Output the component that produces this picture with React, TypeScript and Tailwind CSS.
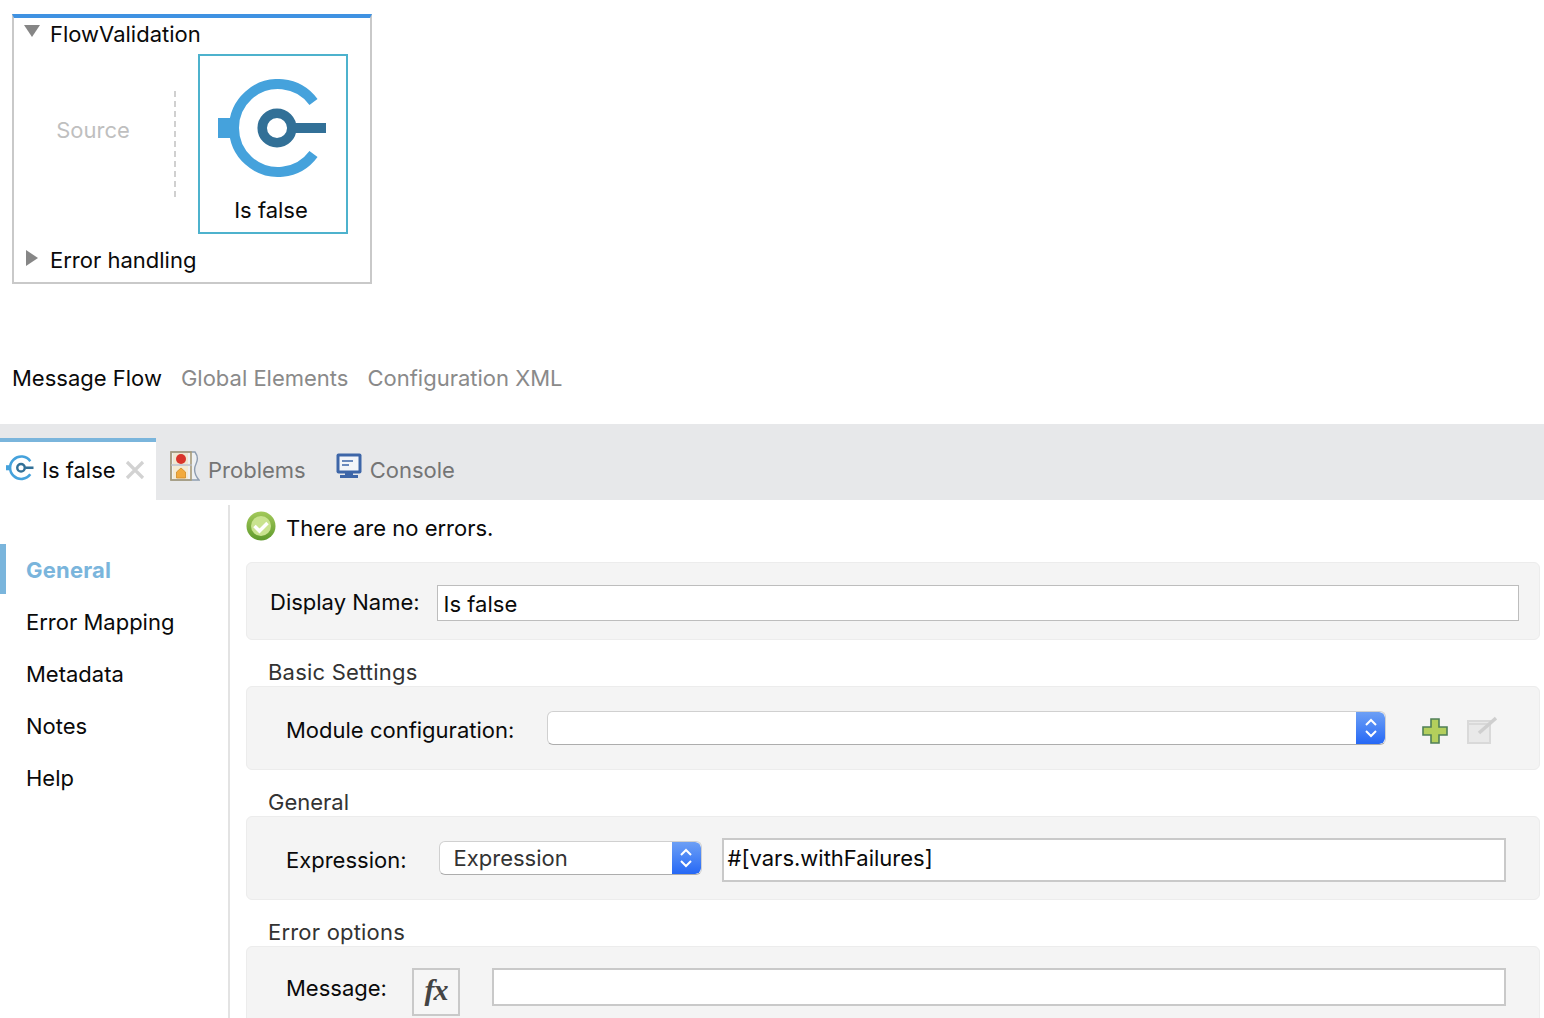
import React from "react";

const Logo = ({ className }: { className?: string }) => (
  <svg viewBox="0 0 110 100" className={className} fill="none">
    <path d="M95.5 23A44 44 0 1 0 95.5 75" stroke="#45a2dc" strokeWidth="10" />
    <rect x="0" y="39" width="12" height="20" fill="#45a2dc" />
    <circle cx="59" cy="49" r="14.8" stroke="#327097" strokeWidth="9.5" />
    <rect x="76" y="44" width="32" height="10" fill="#327097" />
  </svg>
);

const Chevrons = () => (
  <div className="flex h-full w-[29px] items-center justify-center rounded-r-[6px] bg-gradient-to-b from-[#6d9ff5] to-[#2567f5]">
    <svg viewBox="0 0 14 22" className="h-[22px] w-[14px]" fill="none" stroke="white" strokeWidth="2">
      <path d="M2 8l5-5 5 5M2 14l5 5 5-5" />
    </svg>
  </div>
);

const Panel = ({ className, children }: { className?: string; children: React.ReactNode }) => (
  <div className={`flex items-center rounded-[6px] border border-[#ececec] bg-[#f4f4f4] ${className ?? ""}`}>{children}</div>
);

export default function App() {
  return (
    <div className="flex h-[1018px] w-[1544px] flex-col overflow-hidden bg-white text-[22px] leading-[28px] text-[#0a0a0a] [font-family:Inter,sans-serif]">
      <div className="flex h-[424px] flex-col pl-3 pt-[14px]">
        <div className="flex h-[270px] w-[360px] flex-col border-2 border-t-4 border-[#c9c9c9] border-t-[#3f92e2]">
          <div className="flex h-[32px] items-center">
            <svg viewBox="0 0 16 12" className="ml-[10px] mb-[6px] h-3 w-4">
              <path d="M0 0h16L8 12z" fill="#868686" />
            </svg>
            <span className="ml-[10px]">FlowValidation</span>
          </div>
          <div className="flex h-[184px] items-start">
            <div className="mt-[41px] flex h-[106px] w-[162px] justify-center border-r-2 border-dashed border-[#d0d0d0] pr-[2px] pt-[25px] text-[#bfbfbf]">
              Source
            </div>
            <div className="ml-[22px] mt-[4px] flex h-[180px] w-[150px] flex-col items-center border-2 border-[#4db2cd]">
              <Logo className="mt-[23px] ml-[18px] h-[100px] w-[110px] self-start" />
              <span className="mr-[4px] mt-[17px]">Is false</span>
            </div>
          </div>
          <div className="mt-[4px] flex h-[44px] items-center">
            <svg viewBox="0 0 12 16" className="ml-[12px] mb-[4px] h-4 w-3">
              <path d="M0 0l12 8L0 16z" fill="#868686" />
            </svg>
            <span className="ml-[12px]">Error handling</span>
          </div>
        </div>
        <div className="mt-[80px] flex gap-[19px] text-[#8a8a8a]">
          <span className="text-[#0a0a0a]">Message Flow</span>
          <span>Global Elements</span>
          <span>Configuration XML</span>
        </div>
      </div>

      <div className="flex h-[76px] items-end bg-[#e7e8ea]">
        <div className="flex h-[62px] w-[156px] items-center border-t-4 border-[#7ab5dc] bg-white pb-[2px] pl-[6px]">
          <Logo className="mb-[4px] h-[26px] w-[28px]" />
          <span className="ml-[8px]">Is false</span>
          <svg viewBox="0 0 20 20" className="ml-[9px] h-5 w-5" stroke="#d2d2d2" strokeWidth="3.2">
            <path d="M2 2l16 16M18 2L2 18" />
          </svg>
        </div>
        <div className="flex h-[62px] items-center pl-[14px] pt-[2px] text-[#757575]">
          <svg viewBox="0 0 30 30" className="mb-[8px] h-[30px] w-[30px]">
            <path d="M1 1h24c3 4 3 8 1 12s-2 10 3 16H1z" fill="#eef0f2" stroke="#8f9db0" strokeWidth="1.4" />
            <path d="M1 1h20v28H1z" fill="none" stroke="#a89b78" strokeWidth="1.6" />
            <path d="M1 14h21" stroke="#b9bcc4" strokeWidth="1.4" />
            <path d="M3 2h15v11H3z" fill="#efe6d0" />
            <path d="M3 15h15v13H3z" fill="#f4ead3" />
            <circle cx="11" cy="8" r="5" fill="#d9342b" />
            <path d="M6.5 27v-6l4.5-4 4.5 4v6z" fill="#f2aa3c" stroke="#d08a25" strokeWidth="0.8" />
          </svg>
          <span className="ml-[8px]">Problems</span>
        </div>
        <div className="flex h-[62px] items-center pl-[30px] pt-[2px] text-[#757575]">
          <svg viewBox="0 0 26 26" className="mb-[8px] h-[26px] w-[26px]">
            <rect x="0.5" y="0.5" width="25" height="20" rx="2" fill="#3e66a8" />
            <rect x="3.5" y="3.5" width="19" height="14" fill="#f3f5f9" />
            <path d="M6 8h11M6 12h7" stroke="#3e66a8" strokeWidth="1.5" />
            <path d="M9 20h8v2h5v3H4v-3h5z" fill="#3e66a8" />
          </svg>
          <span className="ml-[8px]">Console</span>
        </div>
      </div>

      <div className="flex min-h-0 flex-1">
        <div className="mt-[5px] flex w-[230px] shrink-0 flex-col border-r-2 border-[#e3e3e3] pt-[39px]">
          <div className="flex h-[50px] items-center border-l-[6px] border-[#7ab5dc] pl-[20px] pt-[2px] font-bold tracking-[0.2px] text-[#7ab5dc]">General</div>
          <div className="mt-[2px] flex h-[52px] items-center pl-[26px]">Error Mapping</div>
          <div className="flex h-[52px] items-center pl-[26px]">Metadata</div>
          <div className="flex h-[52px] items-center pl-[26px]">Notes</div>
          <div className="flex h-[52px] items-center pl-[26px]">Help</div>
        </div>

        <div className="ml-4 flex w-[1294px] flex-col self-start">
          <div className="mt-[12px] flex h-[28px] items-center">
            <svg viewBox="0 0 30 30" className="h-[30px] w-[30px]">
              <defs>
                <linearGradient id="okRing" x1="0" y1="0" x2="0" y2="1">
                  <stop offset="0" stopColor="#a3c95a" />
                  <stop offset="1" stopColor="#5f9a2c" />
                </linearGradient>
              </defs>
              <circle cx="15" cy="15" r="14.5" fill="url(#okRing)" />
              <circle cx="15" cy="15" r="10" fill="#c9e38f" />
              <path d="M8.5 15l5 5 8-8" stroke="white" strokeWidth="3.5" fill="none" />
            </svg>
            <span className="ml-[10px] pt-[4px]">There are no errors.</span>
          </div>

          <Panel className="mt-[22px] h-[78px] pl-[23px]">
            <span className="pt-[2px]">Display Name:</span>
            <div className="ml-[17px] mt-[4px] flex h-[36px] w-[1082px] items-center border border-[#bdbdbd] bg-white pl-[6px] pt-[2px]">Is false</div>
          </Panel>

          <div className="ml-[22px] mt-[18px] h-[28px] tracking-[0.2px] text-[#333]">Basic Settings</div>
          <Panel className="h-[84px] pl-[39px]">
            <span className="pt-[4px]">Module configuration:</span>
            <div className="ml-[33px] flex h-[34px] w-[839px] justify-end overflow-hidden rounded-[6px] border border-[#d0d0d0] border-b-[#adadad] bg-white">
              <Chevrons />
            </div>
            <svg viewBox="0 0 26 26" className="ml-[36px] mt-[6px] h-[26px] w-[26px]">
              <path d="M9 1h8v8h8v8h-8v8H9v-8H1V9h8z" fill="#b3cf5c" stroke="#4f7f57" strokeWidth="1.6" />
            </svg>
            <svg viewBox="0 0 30 28" className="ml-[19px] mt-[4px] h-[28px] w-[30px]">
              <path d="M1 5h22v22H1z" fill="#e9e9e9" stroke="#d9d9d9" strokeWidth="2" />
              <path d="M1 8h22" stroke="#d9d9d9" strokeWidth="2" />
              <path d="M12 17L29 2" stroke="#cfcfcf" strokeWidth="3.5" />
            </svg>
          </Panel>

          <div className="ml-[22px] mt-[18px] h-[28px] text-[#333]">General</div>
          <Panel className="h-[84px] pl-[39px]">
            <span className="pt-[4px]">Expression:</span>
            <div className="ml-[32px] flex h-[34px] w-[263px] items-center overflow-hidden rounded-[6px] border border-[#d0d0d0] border-b-[#adadad] bg-white pl-[14px] text-[#333]">
              <span className="flex-1">Expression</span>
              <Chevrons />
            </div>
            <div className="ml-[20px] mt-[4px] flex h-[44px] w-[784px] items-center border-2 border-[#c9c9c9] bg-white pb-[4px] pl-[4px]">#[vars.withFailures]</div>
          </Panel>

          <div className="ml-[22px] mt-[18px] h-[28px] tracking-[0.2px] text-[#333]">Error options</div>
          <Panel className="h-[100px] items-start pl-[39px] pt-[21px]">
            <span className="pt-[6px]">Message:</span>
            <div className="ml-[25px] flex h-[48px] w-[48px] items-center justify-center border-2 border-[#c9c9c9] bg-[#f6f6f6] pb-[4px] text-[30px] font-bold italic tracking-[-1px] text-[#444] [font-family:'Liberation_Serif',serif]">fx</div>
            <div className="ml-[32px] h-[38px] w-[1014px] border-2 border-[#c9c9c9] bg-white" />
          </Panel>
        </div>
      </div>
    </div>
  );
}
